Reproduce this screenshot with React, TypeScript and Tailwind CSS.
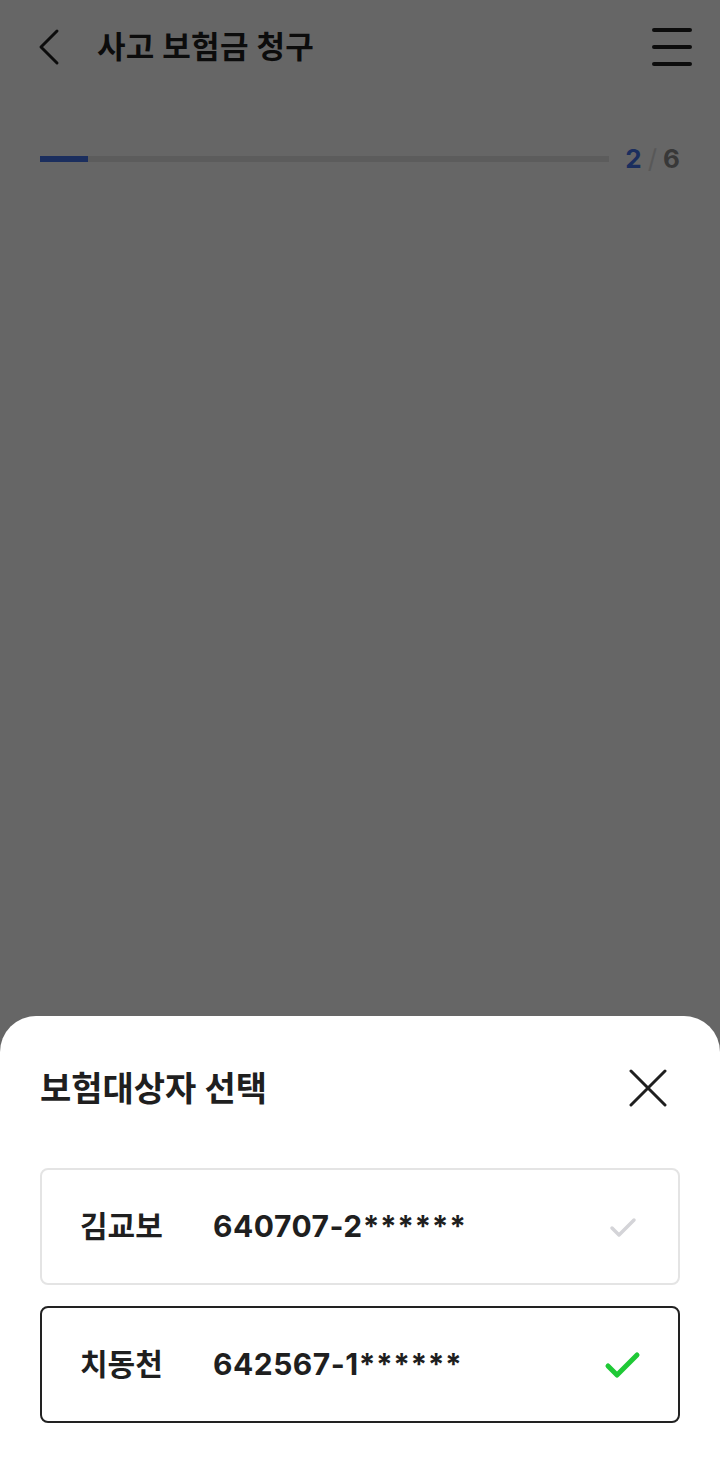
import React, { useState } from 'react';

const people = [
  { name: '김교보', id: '640707-2******' },
  { name: '치동천', id: '642567-1******' },
];

export default function App() {
  const [selected, setSelected] = useState(1);

  return (
    <div
      className="relative w-[720px] h-[1472px] bg-white overflow-hidden text-[#1f1f1f]"
      style={{ fontFamily: 'Inter, "Noto Sans CJK KR", sans-serif' }}
    >
      {/* page behind the sheet */}
      <header className="flex items-center h-[94px] pl-[36px] pr-[28px]">
        <button className="w-[28px] h-[40px] flex items-center">
          <svg width="26" height="38" viewBox="0 0 26 38" fill="none">
            <path d="M21 3 L5 19 L21 35" stroke="#1f1f1f" strokeWidth="3" strokeLinecap="round" strokeLinejoin="round" />
          </svg>
        </button>
        <h1 className="ml-[33px] text-[31px] font-bold tracking-[0.3px]">사고 보험금 청구</h1>
        <button className="ml-auto w-[40px] h-[38px] flex flex-col justify-between">
          <span className="block h-[4px] w-full bg-[#1f1f1f] rounded-full" />
          <span className="block h-[4px] w-full bg-[#1f1f1f] rounded-full" />
          <span className="block h-[4px] w-full bg-[#1f1f1f] rounded-full" />
        </button>
      </header>

      <div className="flex items-center pl-[40px] pr-[40px] mt-[52px]">
        <div className="flex-1 h-[6px] bg-[#e6e6e6]">
          <div className="h-full w-[48px] bg-[#4574ea]" />
        </div>
        <div className="ml-[16px] text-[26px] font-bold leading-none">
          <span className="text-[#4574ea]">2</span>
          <span className="text-[#dcdcdc] font-normal mx-[6px]">/</span>
          <span className="text-[#8c8c8c]">6</span>
        </div>
      </div>

      {/* dim overlay */}
      <div className="absolute inset-0 bg-black/60" />

      {/* bottom sheet */}
      <div className="absolute left-0 right-0 bottom-0 h-[456px] bg-white rounded-t-[36px]">
        <div className="flex items-center justify-between h-[40px] mt-[52px] pl-[40px] pr-[52px]">
          <h2 className="text-[34px] font-bold">보험대상자 선택</h2>
          <button className="w-[40px] h-[40px] flex items-center justify-center">
            <svg width="38" height="38" viewBox="0 0 38 38" fill="none">
              <path d="M2 2 L36 36 M36 2 L2 36" stroke="#1f1f1f" strokeWidth="3" strokeLinecap="round" />
            </svg>
          </button>
        </div>

        <div className="flex flex-col gap-[21px] px-[40px] mt-[60px]">
          {people.map((p, i) => {
            const on = selected === i;
            return (
              <button
                key={p.id}
                onClick={() => setSelected(i)}
                className={
                  on
                    ? 'flex items-center h-[117px] rounded-[8px] border-2 border-[#222] pl-[38px] pr-[35px] text-left'
                    : 'flex items-center h-[117px] rounded-[8px] border-2 border-[#e4e4e4] pl-[38px] pr-[35px] text-left'
                }
              >
                <span className="w-[133px] text-[30px] font-bold">{p.name}</span>
                <span className="text-[30px] font-bold tracking-[0.5px]">{p.id}</span>
                <span className="ml-auto w-[40px] flex justify-center">
                  {on ? (
                    <svg width="38" height="30" viewBox="0 0 38 30" fill="none">
                      <path d="M4 16 L13 25 L33 5" stroke="#1fc936" strokeWidth="5" strokeLinecap="round" strokeLinejoin="round" />
                    </svg>
                  ) : (
                    <svg width="30" height="24" viewBox="0 0 30 24" fill="none">
                      <path d="M4 13 L11 20 L26 5" stroke="#d4d4d8" strokeWidth="3.5" strokeLinecap="round" strokeLinejoin="round" />
                    </svg>
                  )}
                </span>
              </button>
            );
          })}
        </div>
      </div>
    </div>
  );
}
